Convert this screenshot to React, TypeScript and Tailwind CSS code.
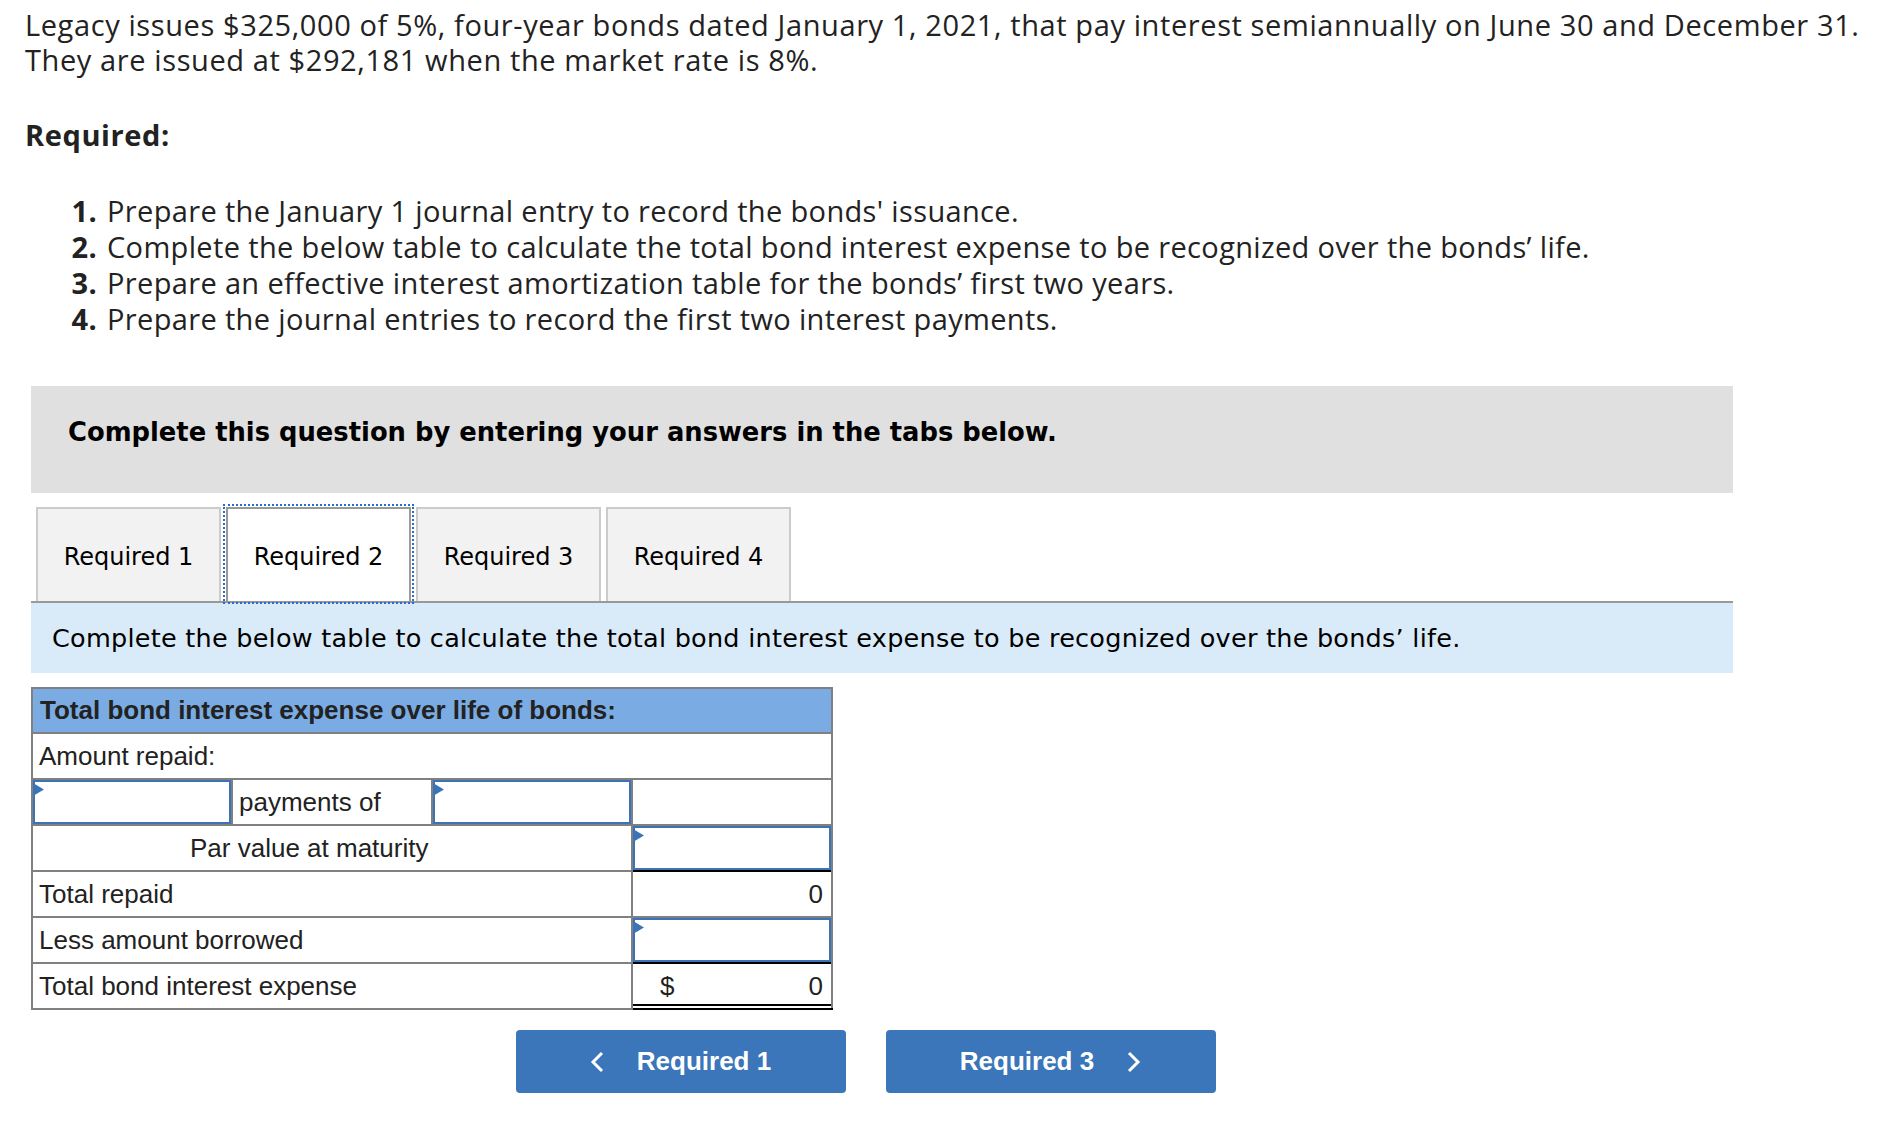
import { Fragment } from 'react'

const steps = [
  "Prepare the January 1 journal entry to record the bonds' issuance.",
  'Complete the below table to calculate the total bond interest expense to be recognized over the bonds’ life.',
  'Prepare an effective interest amortization table for the bonds’ first two years.',
  'Prepare the journal entries to record the first two interest payments.',
]

const tabs = ['Required 1', 'Required 2', 'Required 3', 'Required 4']

const InputBox = () => (
  <div className="relative h-full w-full border-2 border-[#3b73b9] bg-white">
    <svg className="absolute left-[-2px] top-[1px]" width="11" height="13" viewBox="0 0 11 13">
      <polygon points="0,0 11,6.5 0,13" fill="#3b73b9" />
    </svg>
  </div>
)

const Chevron = ({ dir }: { dir: 'left' | 'right' }) => (
  <svg width="14" height="22" viewBox="0 0 14 22" fill="none">
    <polyline
      points={dir === 'left' ? '12,2 3,11 12,20' : '2,2 11,11 2,20'}
      stroke="white"
      strokeWidth="3"
      strokeLinejoin="miter"
    />
  </svg>
)

export default function App() {
  return (
    <div className="min-h-[1133px] w-[1884px] bg-white pt-[7px] text-[#222]">
      <div className="whitespace-nowrap pl-[25px] font-['Open_Sans',sans-serif] text-[29px] leading-[35px] tracking-[0.6px]">
        <p>
          Legacy issues $325,000 of 5%, four-year bonds dated January 1, 2021, that pay interest semiannually on June 30
          and December 31.
          <br />
          They are issued at $292,181 when the market rate is 8%.
        </p>
        <p className="mt-[40px] font-bold">Required:</p>
      </div>

      <ol className="mt-[41px] whitespace-nowrap pl-[60px] font-['Open_Sans',sans-serif] text-[29px] leading-[36px] tracking-[0.35px]">
        {steps.map((step, i) => (
          <li className="flex" key={step}>
            <span className="w-[37px] text-right font-bold">{i + 1}.</span>
            <span className="ml-[10px]">{step}</span>
          </li>
        ))}
      </ol>

      <div className="ml-[31px] mt-[49px] w-[1702px] font-['DejaVu_Sans',Verdana,sans-serif] text-black">
        <div className="h-[107px] bg-[#e0e0e0] pl-[37px] pt-[32px] text-[25.8px] font-bold leading-[28px]">
          Complete this question by entering your answers in the tabs below.
        </div>

        <div className="mt-[14px] flex items-end gap-[5px] border-b-2 border-[#999] pl-[5px]">
          {tabs.map((tab, i) =>
            i === 1 ? (
              <div
                key={tab}
                className="relative z-10 -mx-[3px] -mb-[3px] -mt-[3px] border-2 border-dotted border-[#2b6cc4] p-[1px]"
              >
                <div className="flex h-[94px] w-[185px] items-center justify-center border-2 border-b-0 border-[#999] bg-white pt-[4px] text-[24px]">
                  {tab}
                </div>
              </div>
            ) : (
              <div
                key={tab}
                className="flex h-[94px] w-[185px] items-center justify-center border-2 border-b-0 border-[#cbcbcb] bg-[#f2f2f2] pt-[4px] text-[24px]"
              >
                {tab}
              </div>
            ),
          )}
        </div>

        <div className="flex h-[70px] items-center bg-[#d9eaf8] pl-[21px] text-[25.5px] tracking-[0.25px]">
          Complete the below table to calculate the total bond interest expense to be recognized over the bonds’ life.
        </div>
      </div>

      <div className="ml-[31px] mt-[14px] grid w-[802px] grid-cols-[198px_198px_198px_198px] gap-[2px] bg-[#808080] p-[2px] font-['Liberation_Sans',Arial,sans-serif] text-[26px] text-[#222]">
        <div className="col-span-4 flex h-[43px] items-center bg-[#7aace3] pl-[7px] font-bold">
          Total bond interest expense over life of bonds:
        </div>
        <div className="col-span-4 flex h-[44px] items-center bg-white pl-[6px]">Amount repaid:</div>

        <div className="h-[44px] bg-white">
          <InputBox />
        </div>
        <div className="flex h-[44px] items-center bg-white pl-[6px]">payments of</div>
        <div className="h-[44px] bg-white">
          <InputBox />
        </div>
        <div className="h-[44px] bg-white" />

        {[
          { label: 'Par value at maturity', kind: 'input' },
          { label: 'Total repaid', kind: 'zero' },
          { label: 'Less amount borrowed', kind: 'input' },
          { label: 'Total bond interest expense', kind: 'total' },
        ].map((row) => (
          <Fragment key={row.label}>
            <div
              className={
                row.label.startsWith('Par')
                  ? 'col-span-3 flex h-[44px] items-center bg-white pl-[157px]'
                  : 'col-span-3 flex h-[44px] items-center bg-white pl-[6px]'
              }
            >
              {row.label}
            </div>
            {row.kind === 'input' && (
              <div className="relative h-[44px] bg-white after:absolute after:-bottom-[2px] after:left-0 after:right-0 after:h-[2px] after:bg-black">
                <InputBox />
              </div>
            )}
            {row.kind === 'zero' && (
              <div className="flex h-[44px] items-center justify-end bg-white pr-[8px]">0</div>
            )}
            {row.kind === 'total' && (
              <div className="relative flex h-[44px] items-center justify-between bg-white pl-[27px] pr-[8px] before:absolute before:bottom-[2px] before:left-0 before:right-0 before:h-[2px] before:bg-black after:absolute after:-bottom-[2px] after:left-0 after:-right-[2px] after:h-[2px] after:bg-black">
                <span>$</span>
                <span>0</span>
              </div>
            )}
          </Fragment>
        ))}
      </div>

      <div className="mt-[20px] flex w-[1731px] justify-center gap-[40px] font-['Liberation_Sans',Arial,sans-serif] text-[26px] font-bold text-white">
        <button className="flex h-[63px] w-[330px] items-center justify-center gap-[33px] rounded-[4px] bg-[#3a76b9]" type="button">
          <Chevron dir="left" />
          <span>Required 1</span>
        </button>
        <button className="flex h-[63px] w-[330px] items-center justify-center gap-[33px] rounded-[4px] bg-[#3a76b9]" type="button">
          <span>Required 3</span>
          <Chevron dir="right" />
        </button>
      </div>
    </div>
  )
}
